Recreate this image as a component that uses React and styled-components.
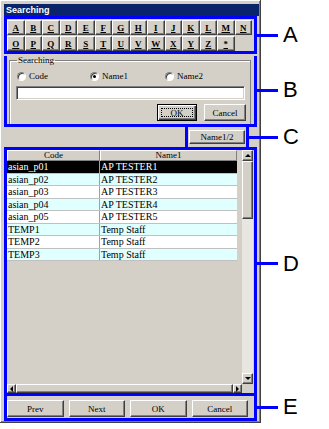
import React from "react";
import styled, { createGlobalStyle } from "styled-components";

const WIN = "#d4d0c8";
const NAVY = "#0a246a";
const MARK = "#0000ff";

const GlobalStyle = createGlobalStyle`
  html, body { margin: 0; padding: 0; background: #fff; }
  body { font-family: "Liberation Serif", "Times New Roman", serif; }
`;

const letters1 = "ABCDEFGHIJKLMN".split("");
const letters2 = "OPQRSTUVWXYZ*".split("");

const people = [
  { code: "asian_p01", name: "AP TESTER1" },
  { code: "asian_p02", name: "AP TESTER2" },
  { code: "asian_p03", name: "AP TESTER3" },
  { code: "asian_p04", name: "AP TESTER4" },
  { code: "asian_p05", name: "AP TESTER5" },
  { code: "TEMP1", name: "Temp Staff" },
  { code: "TEMP2", name: "Temp Staff" },
  { code: "TEMP3", name: "Temp Staff" },
];

const Callout = ({ letter, w = 24, dy = 0 }) => (
  <Note $dy={dy}>
    <Leader $w={w} />
    <Letter>{letter}</Letter>
  </Note>
);

const Arrow = ({ dir }) => {
  const pts = {
    up: "1,4 4,1 7,4",
    down: "1,1 4,4 7,1",
    left: "4,1 1,4 4,7",
    right: "1,1 4,4 1,7",
  }[dir];
  const vertical = dir === "up" || dir === "down";
  return (
    <svg width={vertical ? 8 : 5} height={vertical ? 5 : 8} viewBox={vertical ? "0 0 8 5" : "0 0 5 8"}>
      <polygon points={pts} fill="#000" />
    </svg>
  );
};

export default () => {
  return (
    <>
      <GlobalStyle />
      <Window>
        <TitleBar>Searching</TitleBar>

        <Marked>
          <LetterGrid>
            {letters1.map(l => (
              <Key key={l}>{l}</Key>
            ))}
            {letters2.map(l => (
              <Key key={l}>{l}</Key>
            ))}
          </LetterGrid>
          <Callout letter="A" />
        </Marked>

        <Marked $noTop>
          <Group>
            <Legend>Searching</Legend>
            <RadioRow>
              <Choice>
                <RadioDot />
                Code
              </Choice>
              <Choice>
                <RadioDot $on />
                Name1
              </Choice>
              <Choice>
                <RadioDot />
                Name2
              </Choice>
            </RadioRow>
            <Field readOnly value="" />
            <ActionRow>
              <DefaultButton $w={40}>
                <Focus>OK</Focus>
              </DefaultButton>
              <Button $w={42}>Cancel</Button>
            </ActionRow>
          </Group>
          <Callout letter="B" />
        </Marked>

        <SortRow>
          <SortMark $noTop $noBottom>
            <SortButton>Name1/2</SortButton>
            <Callout letter="C" w={32} />
          </SortMark>
        </SortRow>

        <Marked>
          <GridPanel>
            <GridBody>
              <Table>
                <HeadRow>
                  <HeadCell>Code</HeadCell>
                  <HeadCell>Name1</HeadCell>
                </HeadRow>
                {people.map((p, i) => (
                  <Row key={p.code} $selected={i === 0} $tint={i % 2 === 1}>
                    <Cell $first>{p.code}</Cell>
                    <Cell>{p.name}</Cell>
                  </Row>
                ))}
              </Table>
              <VScroll>
                <ArrowBox $h={11}>
                  <Arrow dir="up" />
                </ArrowBox>
                <Thumb $h={58} />
                <Track />
                <ArrowBox $h={11}>
                  <Arrow dir="down" />
                </ArrowBox>
              </VScroll>
            </GridBody>
            <HScrollRow>
              <HScroll>
                <ArrowBox $w={9}>
                  <Arrow dir="left" />
                </ArrowBox>
                <HThumb />
                <ArrowBox $w={9}>
                  <Arrow dir="right" />
                </ArrowBox>
              </HScroll>
              <Corner />
            </HScrollRow>
          </GridPanel>
          <Callout letter="D" dy={-8} />
        </Marked>

        <Marked $noTop>
          <NavRow>
            <Button>Prev</Button>
            <Button>Next</Button>
            <Button>OK</Button>
            <Button>Cancel</Button>
          </NavRow>
          <Callout letter="E" />
        </Marked>
      </Window>
    </>
  );
};

const raised = `
  border-style: solid;
  border-width: 1px;
  border-color: #fff #404040 #404040 #fff;
  box-shadow: inset -1px -1px 0 #808080;
`;

const Window = styled.div`
  width: 261px;
  box-sizing: border-box;
  background: ${WIN};
  padding: 4px 1px 1px 4px;
  border-right: 1px solid #404040;
  border-bottom: 1px solid #404040;
  box-shadow: inset 1px 1px 0 #fff, inset -1px -1px 0 #808080;
`;

const TitleBar = styled.div`
  height: 12px;
  background: ${NAVY};
  color: #fff;
  font: bold 9px "Liberation Sans", Arial, sans-serif;
  line-height: 12px;
  padding-left: 2px;
`;

const Marked = styled.div`
  position: relative;
  margin-right: 2px;
  border: 3px solid ${MARK};
  ${({ $noTop }) => $noTop && "border-top: none;"}
  ${({ $noBottom }) => $noBottom && "border-bottom: none;"}
`;

const Note = styled.div`
  position: absolute;
  left: 100%;
  top: 50%;
  display: flex;
  align-items: center;
  transform: translateY(calc(-50% + ${({ $dy }) => $dy}px));
  pointer-events: none;
`;

const Leader = styled.span`
  width: ${({ $w }) => $w}px;
  height: 3px;
  background: ${MARK};
`;

const Letter = styled.span`
  margin-left: 5px;
  font: 22px "Liberation Sans", Arial, sans-serif;
  line-height: 22px;
  color: #000;
`;

const LetterGrid = styled.div`
  display: grid;
  grid-template-columns: repeat(14, 1fr);
  grid-auto-rows: 15px;
  row-gap: 1px;
  padding: 1px 2px 0 0;
`;

const Key = styled.button`
  appearance: none;
  margin: 0;
  padding: 0;
  background: ${WIN};
  ${raised}
  font: bold 9px "Liberation Serif", "Times New Roman", serif;
  text-decoration: underline;
  color: #000;
`;

const Group = styled.fieldset`
  margin: 2px 3px 0 2px;
  padding: 2px 5px 3px 6px;
  border: 1px solid #808080;
  border-bottom: none;
  box-shadow: inset 1px 1px 0 #fff;
`;

const Legend = styled.legend`
  padding: 0 1px;
  margin-left: 1px;
  font-size: 9px;
  line-height: 9px;
`;

const RadioRow = styled.div`
  display: grid;
  grid-template-columns: 73px 75px auto;
  height: 14px;
  align-items: center;
  margin-top: 2px;
  font-size: 9px;
`;

const Choice = styled.label`
  display: flex;
  align-items: center;
  gap: 3px;
  padding-left: 1px;
`;

const RadioDot = styled.span`
  width: 9px;
  height: 9px;
  box-sizing: border-box;
  border-radius: 50%;
  background: #fff;
  border: 1px solid;
  border-color: #808080 #fff #fff #808080;
  box-shadow: inset 1px 1px 0 #404040;
  display: inline-flex;
  align-items: center;
  justify-content: center;

  &::after {
    content: "";
    width: 3px;
    height: 3px;
    border-radius: 50%;
    background: #000;
    display: ${({ $on }) => ($on ? "block" : "none")};
  }
`;

const Field = styled.input`
  display: block;
  width: 100%;
  height: 14px;
  box-sizing: border-box;
  margin: 3px 0 0;
  padding: 0;
  background: #fff;
  border: 1px solid;
  border-color: #808080 #fff #fff #808080;
  box-shadow: inset 1px 1px 0 #404040, inset -1px -1px 0 ${WIN};
  outline: none;
`;

const ActionRow = styled.div`
  display: flex;
  justify-content: flex-end;
  gap: 7px;
  margin: 4px -1px 0 0;
`;

const Button = styled.button`
  appearance: none;
  margin: 0;
  padding: 0;
  width: ${({ $w }) => ($w ? `${$w}px` : "auto")};
  height: 17px;
  background: ${WIN};
  ${raised}
  font: 9px "Liberation Serif", "Times New Roman", serif;
  color: #000;
`;

const DefaultButton = styled(Button)`
  border-color: #000;
  box-shadow: inset 1px 1px 0 #fff, inset -1px -1px 0 #404040, inset -2px -2px 0 #808080;
  height: 17px;
  display: flex;
  align-items: center;
  justify-content: center;
  padding: 3px;
`;

const Focus = styled.span`
  flex: 1;
  align-self: stretch;
  display: flex;
  align-items: center;
  justify-content: center;
  border: 1px dotted #000;
`;

const SortRow = styled.div`
  height: 20px;
  display: flex;
  justify-content: flex-end;
  margin-right: 10px;
`;

const SortMark = styled(Marked)`
  margin-right: 0;
  width: 58px;
  display: flex;
`;

const SortButton = styled(Button)`
  flex: 1;
  height: 14px;
  margin: 3px 1px;
`;

const GridPanel = styled.div`
  height: 243px;
  display: flex;
  flex-direction: column;
  background: ${WIN};
`;

const GridBody = styled.div`
  flex: 1;
  display: flex;
  justify-content: space-between;
`;

const Table = styled.div`
  width: 230px;
`;

const HeadRow = styled.div`
  display: grid;
  grid-template-columns: 93px 137px;
  height: 11px;
`;

const HeadCell = styled.div`
  box-sizing: border-box;
  background: ${WIN};
  border-style: solid;
  border-width: 1px;
  border-color: #fff #808080 #808080 #fff;
  font-size: 9px;
  line-height: 9px;
  text-align: center;
`;

const Row = styled.div`
  display: grid;
  grid-template-columns: 93px 137px;
  height: 12.5px;
  box-sizing: border-box;
  border-bottom: 1px solid #c0c0c0;
  background: ${({ $selected, $tint }) => ($selected ? "#000" : $tint ? "#e0ffff" : "#fff")};
  color: ${({ $selected }) => ($selected ? "#fff" : "#000")};
  font-size: 10px;
  line-height: 11.5px;
`;

const Cell = styled.div`
  padding-left: 1px;
  white-space: nowrap;
  overflow: hidden;
  ${({ $first }) => $first && "border-right: 1px solid #a0a0a0;"}
`;

const VScroll = styled.div`
  width: 11px;
  margin-right: 1px;
  display: flex;
  flex-direction: column;
`;

const ArrowBox = styled.div`
  box-sizing: border-box;
  ${({ $h }) => ($h ? `height: ${$h}px;` : "")}
  ${({ $w }) => ($w ? `width: ${$w}px;` : "")}
  background: ${WIN};
  ${raised}
  display: flex;
  align-items: center;
  justify-content: center;
`;

const Thumb = styled.div`
  height: ${({ $h }) => $h}px;
  box-sizing: border-box;
  background: ${WIN};
  ${raised}
`;

const Track = styled.div`
  flex: 1;
  background: #e8e6e1;
`;

const HScrollRow = styled.div`
  height: 9px;
  display: flex;
`;

const HScroll = styled.div`
  flex: 1;
  display: flex;
  background: #e8e6e1;
`;

const HThumb = styled.div`
  flex: 1;
  box-sizing: border-box;
  background: ${WIN};
  ${raised}
`;

const Corner = styled.div`
  width: 12px;
  background: ${WIN};
`;

const NavRow = styled.div`
  display: grid;
  grid-template-columns: repeat(4, 1fr);
  gap: 5px;
  padding: 4px 6px 1px 0;
`;
